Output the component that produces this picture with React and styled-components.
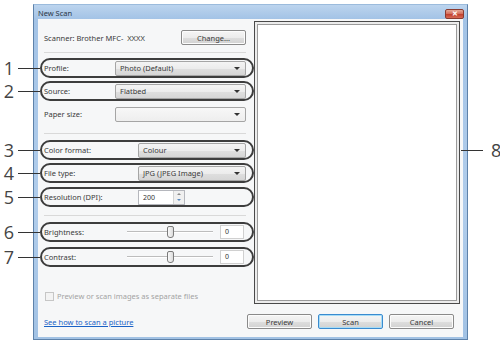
import React from "react";
import styled, { createGlobalStyle } from "styled-components";

const GlobalStyle = createGlobalStyle`
  html, body {
    margin: 0;
    padding: 0;
    background: #fff;
  }
  body {
    width: 500px;
    height: 346px;
    overflow: hidden;
    font-family: "Noto Sans", "Open Sans", sans-serif;
  }
`;

const rows = [
  { id: 1, label: "Profile:", value: "Photo (Default)", w: 71, mt: 0 },
  { id: 2, label: "Source:", value: "Flatbed", w: 71, mt: 3 },
  { id: null, label: "Paper size:", value: "", w: 71, mt: 3, light: true },
];

const formatRows = [
  { id: 3, label: "Color format:", value: "Colour", w: 94, mt: 0 },
  { id: 4, label: "File type:", value: "JPG (JPEG Image)", w: 94, mt: 3 },
];

const sliders = [
  { id: 6, label: "Brightness:", mt: 0 },
  { id: 7, label: "Contrast:", mt: 5 },
];

const Callout = ({ n }) => (
  <StyledCallout>
    <StyledCalloutNum>{n}</StyledCalloutNum>
    <StyledCalloutLine />
  </StyledCallout>
);

const Select = ({ value, light }) => (
  <StyledSelect $light={light}>
    <span>{value}</span>
    <StyledArrow />
  </StyledSelect>
);

export default function App() {
  return (
    <>
      <GlobalStyle />
      <StyledFigure>
        <StyledWindow>
          <StyledTitleBar>
            <StyledTitle>New Scan</StyledTitle>
            <StyledClose>✕</StyledClose>
          </StyledTitleBar>
          <StyledClient>
            <StyledTopRow>
              <StyledLeftPanel>
                <StyledScannerRow>
                  <StyledText>Scanner: Brother MFC-  XXXX</StyledText>
                  <StyledButton>Change...</StyledButton>
                </StyledScannerRow>
                <StyledSeparator $mt={7} $mb={5} />
                {rows.map((r) => (
                  <StyledRow key={r.label} $marked={!!r.id} $mt={r.mt}>
                    {r.id && <Callout n={r.id} />}
                    <StyledLabel $w={r.w}>{r.label}</StyledLabel>
                    <Select value={r.value} light={r.light} />
                  </StyledRow>
                ))}
                <StyledSeparator $mt={9} $mb={6} />
                {formatRows.map((r) => (
                  <StyledRow key={r.label} $marked $mt={r.mt}>
                    <Callout n={r.id} />
                    <StyledLabel $w={r.w}>{r.label}</StyledLabel>
                    <Select value={r.value} />
                  </StyledRow>
                ))}
                <StyledRow $marked $mt={4}>
                  <Callout n={5} />
                  <StyledLabel $w={94}>Resolution (DPI):</StyledLabel>
                  <StyledSpinBox>
                    <StyledSpinValue>200</StyledSpinValue>
                    <StyledSpinner>
                      <StyledSpinArrow $up />
                      <StyledSpinArrow />
                    </StyledSpinner>
                  </StyledSpinBox>
                </StyledRow>
                <StyledSeparator $mt={8} $mb={6} />
                {sliders.map((s) => (
                  <StyledRow key={s.label} $marked $mt={s.mt}>
                    <Callout n={s.id} />
                    <StyledLabel $w={83}>{s.label}</StyledLabel>
                    <StyledSlider>
                      <StyledTrack />
                      <StyledThumb />
                      <StyledTrack />
                    </StyledSlider>
                    <StyledValueBox>0</StyledValueBox>
                  </StyledRow>
                ))}
                <StyledCheckRow>
                  <StyledCheckBox />
                  <span>Preview or scan images as separate files</span>
                </StyledCheckRow>
              </StyledLeftPanel>
              <StyledPreview>
                <StyledCalloutRight>
                  <StyledCalloutLine />
                  <StyledCalloutNum $right>8</StyledCalloutNum>
                </StyledCalloutRight>
              </StyledPreview>
            </StyledTopRow>
            <StyledBottomRow>
              <StyledLink>See how to scan a picture</StyledLink>
              <StyledButtonGroup>
                <StyledButton>Preview</StyledButton>
                <StyledButton $default>Scan</StyledButton>
                <StyledButton>Cancel</StyledButton>
              </StyledButtonGroup>
            </StyledBottomRow>
          </StyledClient>
        </StyledWindow>
      </StyledFigure>
    </>
  );
}

const StyledFigure = styled.div`
  width: 500px;
  height: 346px;
  box-sizing: border-box;
  padding: 4px 0 0 33px;
`;

const StyledWindow = styled.div`
  width: 435px;
  height: 336px;
  box-sizing: border-box;
  display: flex;
  flex-direction: column;
  padding: 0 4px 2px 4px;
  border: 1px solid #5e82aa;
  border-top-color: #9bbbdc;
  background: linear-gradient(180deg, #bcd4ee 0px, #a3c3e6 14px, #b1cdeb 60%, #a2c2e4 100%);
`;

const StyledTitleBar = styled.div`
  height: 14px;
  display: flex;
  justify-content: space-between;
`;

const StyledTitle = styled.div`
  padding-top: 4px;
  font-size: 7.5px;
  line-height: 9px;
  color: #2a3646;
`;

const StyledClose = styled.div`
  align-self: flex-end;
  width: 19px;
  height: 10px;
  box-sizing: border-box;
  margin-right: -1px;
  border: 1px solid #8a3b30;
  border-radius: 2px;
  background: linear-gradient(180deg, #e5a897 0%, #d4705e 45%, #c2412f 55%, #d66a55 100%);
  color: #fff;
  font-size: 7px;
  line-height: 8px;
  font-weight: bold;
  text-align: center;
`;

const StyledClient = styled.div`
  flex: 1;
  display: flex;
  flex-direction: column;
  background: #f6f7f8;
`;

const StyledTopRow = styled.div`
  display: flex;
`;

const StyledLeftPanel = styled.div`
  width: 216px;
  box-sizing: border-box;
  padding: 11px 8px 0 6px;
  display: flex;
  flex-direction: column;
`;

const StyledText = styled.span`
  font-size: 7.5px;
  color: #3a3a3a;
  white-space: pre;
`;

const StyledScannerRow = styled.div`
  height: 15px;
  display: flex;
  align-items: center;
  justify-content: space-between;
`;

const StyledSeparator = styled.div`
  height: 1px;
  margin: ${(p) => p.$mt}px 0 ${(p) => p.$mb}px;
  background: #d9d9d9;
`;

const StyledRow = styled.div`
  position: relative;
  height: 20px;
  box-sizing: border-box;
  display: flex;
  align-items: center;
  margin: ${(p) => p.$mt}px -8px 0 -4px;
  padding: 0 6px 0 2px;
  border: 2px solid ${(p) => (p.$marked ? "#3d3d3d" : "transparent")};
  border-radius: 10px;
`;

const StyledLabel = styled.div`
  flex: none;
  width: ${(p) => p.$w}px;
  font-size: 7.5px;
  color: #3a3a3a;
  white-space: nowrap;
`;

const StyledSelect = styled.div`
  flex: 1;
  height: 15px;
  box-sizing: border-box;
  display: flex;
  align-items: center;
  justify-content: space-between;
  padding: 0 5px 0 4px;
  border: 1px solid #a5a5a5;
  border-radius: 2px;
  background: ${(p) =>
    p.$light
      ? "linear-gradient(180deg, #f7f7f7, #eeeeee)"
      : "linear-gradient(180deg, #f4f4f4 0%, #ececec 50%, #dfdfdf 51%, #d6d6d6 100%)"};
  font-size: 7.5px;
  color: #3a3a3a;
`;

const StyledArrow = styled.span`
  width: 0;
  height: 0;
  border-left: 3px solid transparent;
  border-right: 3px solid transparent;
  border-top: 3px solid #333;
`;

const StyledSpinBox = styled.div`
  width: 47px;
  height: 15px;
  box-sizing: border-box;
  display: flex;
  border: 1px solid #b5b7bd;
  background: #fff;
`;

const StyledSpinValue = styled.div`
  flex: 1;
  padding-left: 4px;
  font-size: 7px;
  line-height: 13px;
  color: #333;
`;

const StyledSpinner = styled.div`
  width: 10px;
  display: flex;
  flex-direction: column;
  border-left: 1px solid #d4d4d4;
  background: #f0f0f0;
`;

const StyledSpinArrow = styled.div`
  flex: 1;
  display: flex;
  align-items: center;
  justify-content: center;
  &::after {
    content: "";
    border-left: 2px solid transparent;
    border-right: 2px solid transparent;
    ${(p) => (p.$up ? "border-bottom: 2px solid #8a8a8a;" : "border-top: 2px solid #5a8ac0;")}
  }
`;

const StyledSlider = styled.div`
  width: 86px;
  height: 14px;
  display: flex;
  align-items: center;
`;

const StyledTrack = styled.div`
  flex: 1;
  height: 1px;
  background: #bdbdbd;
  border-bottom: 1px solid #ffffff;
`;

const StyledThumb = styled.div`
  width: 7px;
  height: 12px;
  box-sizing: border-box;
  border: 1px solid #7b7b7b;
  border-radius: 2px 2px 3px 3px;
  background: linear-gradient(90deg, #fafafa, #dcdcdc);
`;

const StyledValueBox = styled.div`
  width: 24px;
  height: 14px;
  box-sizing: border-box;
  margin-left: 7px;
  padding-left: 4px;
  border: 1px solid #d0d0d0;
  background: #fff;
  font-size: 7px;
  line-height: 12px;
  color: #333;
`;

const StyledCheckRow = styled.div`
  display: flex;
  align-items: center;
  gap: 3px;
  margin-top: 24px;
  padding-left: 1px;
  font-size: 7.5px;
  color: #a3a3a3;
`;

const StyledCheckBox = styled.div`
  width: 9px;
  height: 9px;
  box-sizing: border-box;
  border: 1px solid #c6c6c6;
  background: #f3f3f3;
`;

const StyledPreview = styled.div`
  position: relative;
  width: 206px;
  height: 283px;
  box-sizing: border-box;
  margin-top: 2px;
  border: 1px solid #4a4a4a;
  background: #fff;
  box-shadow: inset 0 0 0 2px #ececec, inset 0 0 0 3px #9a9a9a;
`;

const StyledCallout = styled.div`
  position: absolute;
  left: -40px;
  top: 50%;
  width: 38px;
  transform: translateY(-50%);
  display: flex;
  align-items: center;
`;

const StyledCalloutRight = styled.div`
  position: absolute;
  left: 100%;
  top: 128px;
  transform: translateY(-50%);
  display: flex;
  align-items: center;
`;

const StyledCalloutNum = styled.div`
  width: ${(p) => (p.$right ? "auto" : "16px")};
  margin-left: ${(p) => (p.$right ? "8px" : "0")};
  text-align: center;
  font-family: "Open Sans", "Noto Sans", sans-serif;
  font-size: 18px;
  line-height: 18px;
  color: #444;
`;

const StyledCalloutLine = styled.div`
  flex: 1;
  min-width: 22px;
  height: 1px;
  margin-left: 2px;
  background: #333;
`;

const StyledBottomRow = styled.div`
  display: flex;
  align-items: center;
  margin-top: 10px;
  padding: 0 9px 0 6px;
  height: 15px;
`;

const StyledLink = styled.span`
  font-size: 7.5px;
  color: #1a62c6;
  text-decoration: underline;
`;

const StyledButtonGroup = styled.div`
  margin-left: auto;
  display: flex;
  gap: 6px;
`;

const StyledButton = styled.div`
  width: 65px;
  height: 15px;
  box-sizing: border-box;
  display: flex;
  align-items: center;
  justify-content: center;
  border: 1px solid ${(p) => (p.$default ? "#3a8bd0" : "#8a8a8a")};
  border-radius: 2px;
  background: linear-gradient(180deg, #f5f5f5 0%, #ececec 50%, #dedede 51%, #d2d2d2 100%);
  box-shadow: ${(p) => (p.$default ? "inset 0 0 0 1px #a8dcf6" : "inset 0 0 0 1px #fcfcfc")};
  font-size: 7.5px;
  color: #3a3a3a;
`;
